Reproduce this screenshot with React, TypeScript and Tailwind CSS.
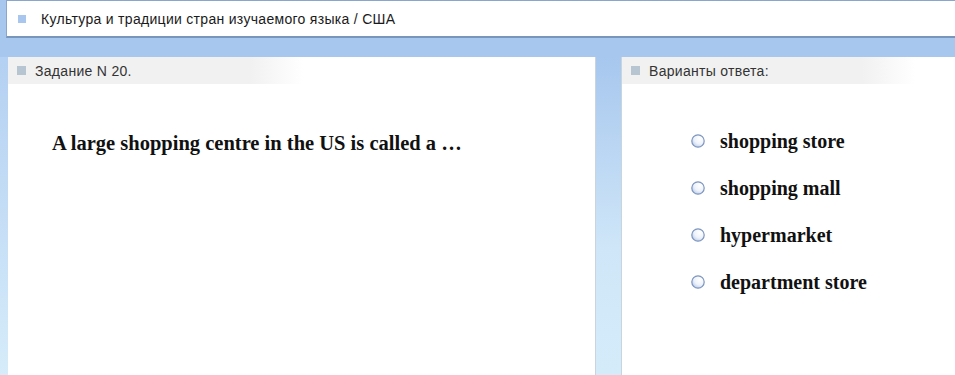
import React from "react";

function Radio() {
  return (
    <svg width="14" height="14" viewBox="0 0 14 14" className="shrink-0">
      <defs>
        <radialGradient id="rg" cx="0.65" cy="0.3" r="0.8">
          <stop offset="0%" stopColor="#ffffff" />
          <stop offset="55%" stopColor="#eef3fa" />
          <stop offset="100%" stopColor="#b3c7e6" />
        </radialGradient>
      </defs>
      <circle cx="7" cy="7" r="6.2" fill="url(#rg)" stroke="#7d95bf" strokeWidth="1.2" />
    </svg>
  );
}

const options = ["shopping store", "shopping mall", "hypermarket", "department store"];

export default function App() {
  const sans = { fontFamily: '"Liberation Sans", Arial, sans-serif' };
  const serif = { fontFamily: '"Liberation Serif", "Times New Roman", serif' };
  return (
    <div className="w-[955px] h-[375px] overflow-hidden bg-[#a7c7ee] flex flex-col">
      <div className="ml-[6px] h-[38px] shrink-0 bg-white border-t border-l border-[#8aa6cc] border-b-2 border-b-[#7896bc] flex items-center pl-[11px]" style={sans}>
        <span className="w-[8px] h-[8px] bg-[#a9c6ef] mr-[15px]" />
        <span className="text-[14px] tracking-[0.3px] text-[#1a1a1a] leading-none">Культура и традиции стран изучаемого языка / США</span>
      </div>
      <div className="h-[19px] shrink-0" />
      <div className="flex flex-1 min-h-0">
        <div className="w-[8px] bg-[linear-gradient(to_bottom,#b4d0f2,#d6ecfa)]" />
        <div className="w-[587px] bg-white flex flex-col">
          <div className="h-[27px] w-[295px] bg-[linear-gradient(to_right,#f1f1f1_82%,#ffffff)] flex items-center pl-[9px]" style={sans}>
            <span className="w-[9px] h-[9px] bg-[#b7c5d2] mr-[9px]" />
            <span className="text-[14px] tracking-[0.3px] text-[#333] leading-none">Задание N 20.</span>
          </div>
          <div className="pl-[44px] pt-[49px] text-[20.5px] font-bold text-[#111] leading-none" style={serif}>
            A large shopping centre in the US is called a …
          </div>
        </div>
        <div className="w-[27px] bg-[linear-gradient(to_bottom,#a7c7ee,#cfe6f8_60%,#d4ecfa)] border-x border-[#c9d5de]" />
        <div className="flex-1 bg-white flex flex-col">
          <div className="h-[27px] w-[293px] bg-[linear-gradient(to_right,#f1f1f1_82%,#ffffff)] flex items-center pl-[9px]" style={sans}>
            <span className="w-[9px] h-[9px] bg-[#b7c5d2] mr-[9px]" />
            <span className="text-[14px] tracking-[0.3px] text-[#333] leading-none">Варианты ответа:</span>
          </div>
          <div className="pl-[69px] pt-[47px] flex flex-col gap-[27px]">
            {options.map((o) => (
              <div key={o} className="flex items-center h-[20px]">
                <Radio />
                <span className="ml-[15px] text-[20px] font-bold text-[#111] leading-none" style={serif}>
                  {o}
                </span>
              </div>
            ))}
          </div>
        </div>
      </div>
    </div>
  );
}
